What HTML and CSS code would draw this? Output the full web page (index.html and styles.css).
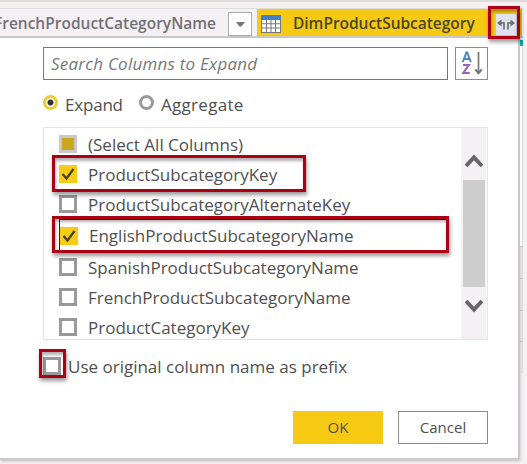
FILE: index.html
```html
<!DOCTYPE html>
<html lang="en">
<head>
<meta charset="utf-8">
<title>Expand columns</title>
<link rel="stylesheet" href="styles.css">
</head>
<body>
<div class="app">
  <header class="columns">
    <div class="column column-left">
      <span class="column-name name-french">FrenchProductCategoryName</span>
      <span class="filter"><svg width="9" height="5" viewBox="0 0 9 5"><path d="M0 0h9L5.5 4.5h-2z" fill="#777"/></svg></span>
    </div>
    <div class="column column-active">
      <svg class="table-icon" width="20" height="18" viewBox="0 0 20 18"><path fill="#777" d="M0 0h20v18H0z"/><path fill="#3f80c6" d="M0 0h20v4.500H0z"/><path fill="#fff" d="M1 5h4v3.300H1zM6 5h3.500v3.300H6zM10.500 5H14v3.300h-3.500zM15 5h4v3.300h-4zM1 9.300h4v3.300H1zM6 9.300h3.500v3.300H6zM10.500 9.300H14v3.300h-3.500zM15 9.300h4v3.300h-4zM1 13.600h4V17H1zM6 13.600h3.500V17H6zM10.500 13.600H14V17h-3.500zM15 13.600h4V17h-4z"/></svg>
      <span class="column-name name-dim">DimProductSubcategory</span>
      <span class="expand-button"><svg width="18" height="11" viewBox="0 0 18 11"><g fill="none" stroke="#6c6c70" stroke-width="1.7"><path d="M3 4h4v6.5M11 10.500V4h4"/></g><path fill="#6c6c70" d="M0 4L4.500 .5v7zM18 4L13.500 .5v7z"/></svg></span>
    </div>
  </header>
  <div class="main">
    <section class="dialog">
      <div class="search-row">
        <div class="search"><span class="t-search">Search Columns to Expand</span></div>
        <div class="sort"><svg width="26" height="28" viewBox="0 0 26 28"><g fill="none" stroke-width="2"><path stroke="#4c86c0" d="M3.800 12L7.400 2.500h.8l3.600 9.500M5 9h5.600"/><path stroke="#9765b8" d="M4 15h6L4.200 23h6.600"/><path stroke="#777" stroke-width="1.700" d="M19.500 2v21"/><path stroke="#777" stroke-width="2.200" d="M16.300 19.500l3.200 3.500 3.200-3.500"/></g></svg></div>
      </div>
      <div class="modes">
        <span class="radio radio-on"></span><span class="t-expand">Expand</span>
        <span class="radio"></span><span class="t-aggregate">Aggregate</span>
      </div>
      <div class="list">
        <div class="items">
          <div class="item"><span class="check partial"></span><span class="label t-1">(Select All Columns)</span></div>
          <div class="item"><span class="check on"><svg width="18" height="18" viewBox="0 0 18 18"><path d="M3.500 9l4 4.500L14.500 4"/></svg></span><span class="label">ProductSubcategoryKey</span></div>
          <div class="item"><span class="check"></span><span class="label">ProductSubcategoryAlternateKey</span></div>
          <div class="item focused"><span class="check on"><svg width="18" height="18" viewBox="0 0 18 18"><path d="M3.500 9l4 4.500L14.500 4"/></svg></span><span class="label">EnglishProductSubcategoryName</span></div>
          <div class="item"><span class="check"></span><span class="label">SpanishProductSubcategoryName</span></div>
          <div class="item"><span class="check"></span><span class="label">FrenchProductSubcategoryName</span></div>
          <div class="item"><span class="check"></span><span class="label">ProductCategoryKey</span></div>
        </div>
        <div class="scrollbar">
          <svg width="18" height="14" viewBox="0 0 18 14"><path d="M1 12L9 3.500l8 8.500"/></svg>
          <div class="thumb"></div>
          <svg width="18" height="14" viewBox="0 0 18 14"><path d="M1 2l8 8.500L17 2"/></svg>
        </div>
      </div>
      <div class="prefix"><span class="check"></span><span class="label">Use original column name as prefix</span></div>
      <div class="buttons">
        <div class="button ok"><span class="t-ok">OK</span></div>
        <div class="button cancel"><span class="t-cancel">Cancel</span></div>
      </div>
    </section>
    <aside class="backdrop">
      <div class="accent"></div>
      <div class="blank"></div>
      <div class="cell"></div><div class="cell"></div><div class="cell"></div><div class="cell"></div>
    </aside>
  </div>
  <div class="callout callout-expand"></div>
  <div class="callout callout-key"></div>
  <div class="callout callout-name"></div>
  <div class="callout callout-prefix"></div>
</div>
</body>
</html>
```

FILE: styles.css
```css
* { box-sizing: border-box; }
body { margin: 0; width: 527px; height: 464px; overflow: hidden; background: #f5f0f4; }
.app {
  position: relative;
  width: 527px;
  height: 464px;
  overflow: hidden;
  padding-top: 8px;
  font-family: "Open Sans", "Noto Sans", sans-serif;
  font-size: 17px;
  line-height: 20px;
  color: #505050;
  white-space: nowrap;
  background: linear-gradient(#dedbd9 0 2px, #f5f0f4 2px);
}
svg { display: block; flex: none; }
.columns { display: flex; width: 523px; height: 30px; border-top: 1px solid #dedbd9; border-bottom: 2px solid #c9c9c9; }
.column { display: flex; align-items: center; height: 27px; font-weight: 600; font-size: 15.5px; }
.column-name { padding-top: 1px; }
.column-left { width: 257px; justify-content: flex-end; padding-right: 5px; color: #727074; }
.filter { display: flex; align-items: center; justify-content: center; width: 24px; height: 24px; margin: 3px 0 0 12px; border: 1px solid #aaa; background: #fff; flex: none; }
.column-active { width: 265px; padding-left: 4px; background: #f6ca12; color: #4b4528; }
.table-icon { margin-top: 2px; }
.name-dim { width: 181px; margin-left: 12px; letter-spacing: -0.03px; }
.expand-button { display: flex; align-items: center; justify-content: center; width: 22px; height: 23px; margin: 3px 0 0 21px; background: #dfe3ed; border: 1px solid #bfc4d0; }
.main { display: flex; height: 426px; }
.dialog { width: 520px; height: 422px; padding: 9px 30px 0 43px; background: #fff; border-right: 2px solid #c8c8c8; border-bottom: 2px solid #cbcbcb; box-shadow: 0 1px 3px #bbb; flex: none; }
.search-row { display: flex; justify-content: space-between; height: 33px; }
.search { width: 405px; padding: 6px 0 0 7px; border: 1px solid #777; color: #777; font-style: italic; letter-spacing: 0.23px; }
.sort { width: 33px; padding: 2px 0 0 3px; border: 1px solid #8e8d87; }
.modes { display: flex; height: 47px; padding-top: 15px; }
.radio { width: 15px; height: 15px; border: 3px solid #999; border-radius: 50%; background: #fff; flex: none; }
.radio-on { border-color: #f3cb2c; background: radial-gradient(#333 0 2.500px, #fff 3.500px); }
.t-expand { width: 58px; margin: 0 16px 0 7px; letter-spacing: -0.2px; }
.t-aggregate { margin-left: 7px; letter-spacing: 0.3px; }
.list { display: flex; width: 445px; height: 213px; border: 1px solid #dfe6eb; }
.items { width: 417px; padding-top: 1px; }
.item { display: flex; align-items: center; height: 30px; padding-left: 15px; gap: 11px; }
.item.focused { width: 389px; height: 33px; margin-left: 15px; padding-left: 0; border: 1px solid #222; }
.label { padding-top: 2px; }
.focused .label { padding-top: 1px; }
.check { width: 18px; height: 18px; border: 3px solid #999; background: #fff; flex: none; }
.check.on { border: 0; background: #f8cb15; }
.check.on path { fill: none; stroke: #45401f; stroke-width: 2.300; }
.check.partial { border-color: #c9c9c9; background: #cda61f; }
.scrollbar { display: flex; flex-direction: column; align-items: center; width: 25px; padding-top: 26px; background: #f5f0f4; }
.scrollbar path { fill: none; stroke: #666; stroke-width: 4; }
.thumb { width: 22px; height: 107px; margin: 12px 0; background: #cdcdcd; }
.prefix { display: flex; align-items: center; height: 20px; margin-top: 16px; gap: 7px; }
.buttons { display: flex; justify-content: flex-end; gap: 15px; margin-top: 35px; }
.button { display: flex; align-items: center; justify-content: center; width: 90px; height: 33px; padding-bottom: 1px; font-size: 15px; }
.ok { background: #f6ca12; }
.cancel { border: 1px solid #8d8d86; }
.backdrop { width: 3px; }
.accent { height: 8px; border-bottom: 6px solid #16aaa0; background: #f5f0f4; }
.blank { height: 200px; background: #fff; border-right: 1px solid #ddd; }
.cell { height: 31.750px; border-top: 1px solid #c5c5c5; background: #deddde; }
.callout { position: absolute; border: 3px solid #ac0014; box-shadow: 1px 3px 4px rgba(0,0,0,.4), inset 1px 3px 3px rgba(0,0,0,.3); }
.callout-expand { left: 488px; top: 6px; width: 32px; height: 33px; }
.callout-key { left: 52px; top: 155px; width: 254px; height: 37px; }
.callout-name { left: 52px; top: 216px; width: 397px; height: 37px; }
.callout-prefix { left: 39px; top: 349px; width: 27px; height: 29px; }
```
